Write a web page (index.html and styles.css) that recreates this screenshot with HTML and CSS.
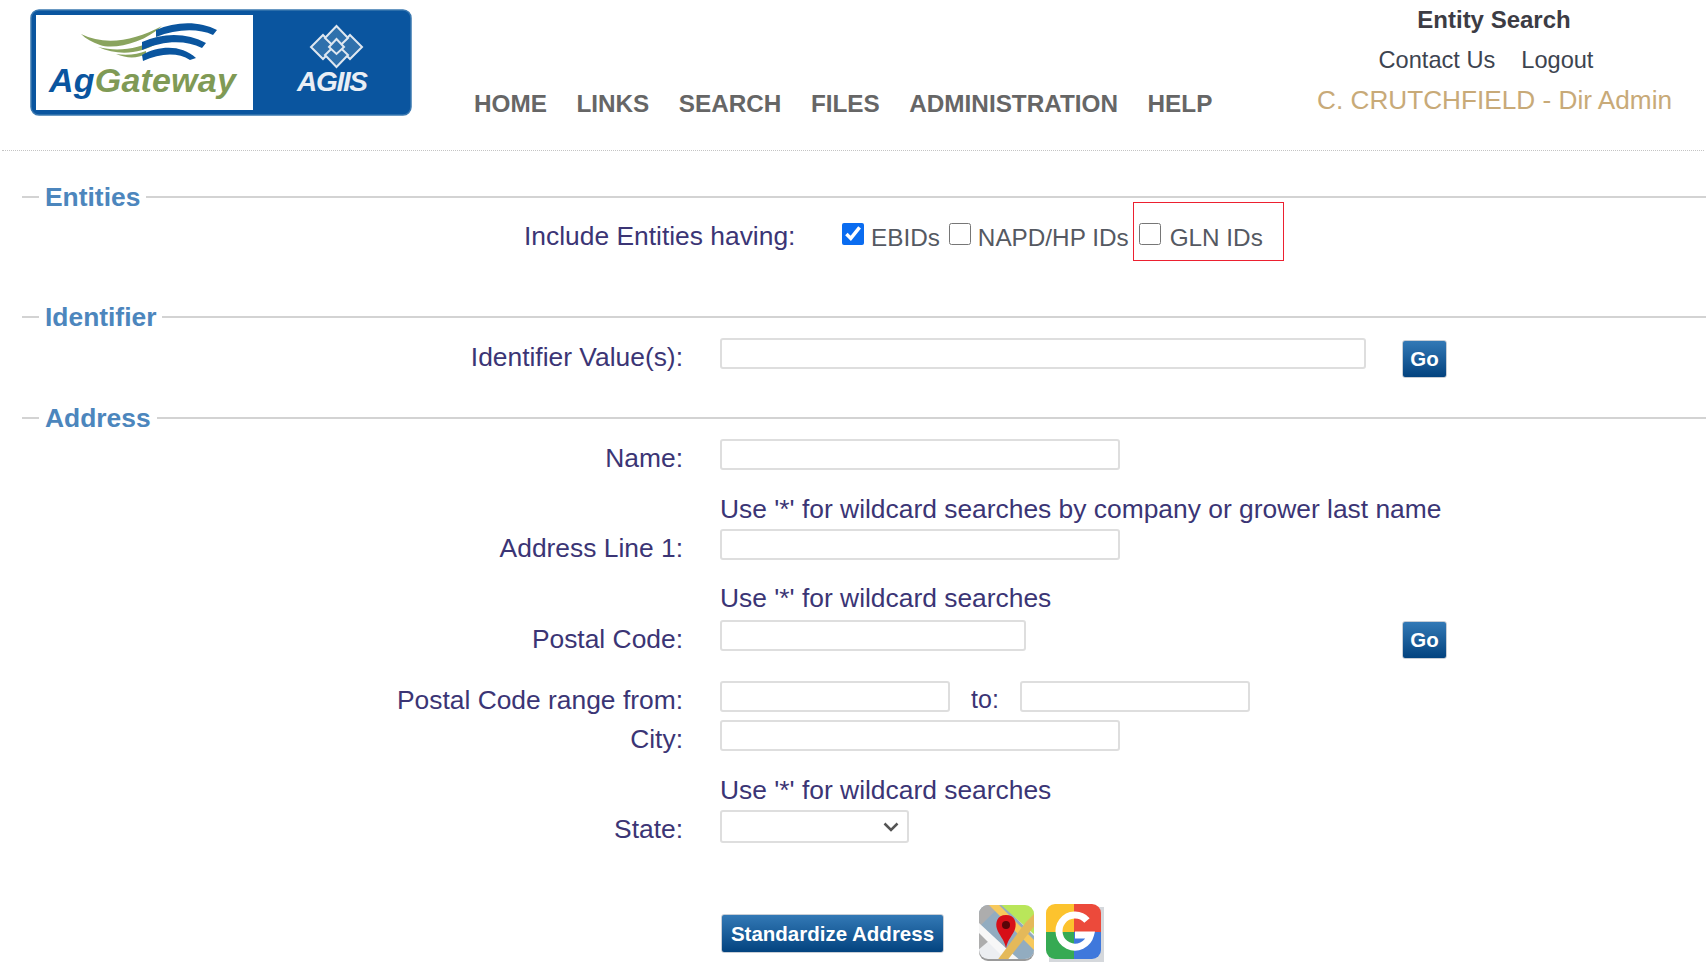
FILE: index.html
```html
<!DOCTYPE html>
<html lang="en">
<head>
<meta charset="utf-8">
<title>Entity Search</title>
<link rel="stylesheet" href="styles.css">
</head>
<body>
<header class="top">
  <svg class="logo" viewBox="0 0 382 107" width="382" height="107" role="img" aria-label="AgGateway AGIIS">
    <rect x="1" y="1" width="380" height="105" rx="8" fill="#0a559f" stroke="#3a78b0" stroke-width="1.500"/>
    <rect x="6" y="6" width="217" height="95" fill="#fff"/>
    <path d="M51 25 C75 37 104 32 132 17 C114 34 84 41 70 36 C62 33 56 30 51 25Z" fill="#8aa45e"/>
    <path d="M68 38 C88 43 108 40 128 30 L128 34 C110 45 88 47 68 38Z" fill="#8aa45e"/>
    <path d="M86 45 C98 47 108 45 116 42 L116 45 C108 49 98 50 86 45Z" fill="#8aa45e"/>
    <path d="M126 21 C146 12 170 12 187 21 L183 26 C168 19 146 20 126 28Z" fill="#0a559f"/>
    <path d="M112 33 C134 23 158 24 176 34 L172 39 C156 31 134 31 112 41Z" fill="#0a559f"/>
    <path d="M112 46 C130 36 152 36 166 49 L160 51 C148 43 130 44 113 52Z" fill="#0a559f"/>
    <text class="logo-ag" x="19" y="83">Ag<tspan class="logo-gate">Gateway</tspan></text>
    <g fill="#2f70ac" stroke="#dfe7f0" stroke-width="2">
      <path d="M293 26 L305 38 L293 50 L281 38Z"/>
      <path d="M320 26 L332 38 L320 50 L308 38Z"/>
      <path d="M306.500 17 L318 29 L306.500 40 L295 29Z"/>
      <path d="M306.500 35 L318 46 L306.500 58 L295 46Z"/>
      <path d="M306.500 30 L314 38 L306.500 45 L299 38Z"/>
    </g>
    <text class="logo-agiis" x="267" y="82">AGIIS</text>
  </svg>
  <nav class="nav">
    <a>HOME</a><a>LINKS</a><a>SEARCH</a><a>FILES</a><a>ADMINISTRATION</a><a>HELP</a>
  </nav>
  <div class="user">
    <div class="user-title">Entity Search</div>
    <div class="user-links"><a>Contact Us</a><a>Logout</a></div>
    <div class="user-name">C. CRUTCHFIELD - Dir Admin</div>
  </div>
</header>

<main>
  <fieldset class="group group-entities">
    <legend>Entities</legend>
    <div class="include">
      <span class="include-label">Include Entities having:</span>
      <label class="check"><input type="checkbox" checked>EBIDs</label>
      <label class="check"><input type="checkbox">NAPD/HP IDs</label>
      <label class="check check-marked"><input type="checkbox">GLN IDs</label>
    </div>
  </fieldset>

  <fieldset class="group group-identifier">
    <legend>Identifier</legend>
    <div class="row row-identifier">
      <label class="label">Identifier Value(s):</label>
      <input class="text w-long" type="text">
      <button class="btn btn-go btn-go-id" type="button">Go</button>
    </div>
  </fieldset>

  <fieldset class="group group-address">
    <legend>Address</legend>
    <div class="row row-name">
      <label class="label">Name:</label>
      <input class="text w-mid" type="text">
    </div>
    <div class="hint hint-first">Use '*' for wildcard searches by company or grower last name</div>
    <div class="row">
      <label class="label">Address Line 1:</label>
      <input class="text w-mid" type="text">
    </div>
    <div class="hint hint-second">Use '*' for wildcard searches</div>
    <div class="row">
      <label class="label">Postal Code:</label>
      <input class="text w-postal" type="text">
      <button class="btn btn-go btn-go-postal" type="button">Go</button>
    </div>
    <div class="row row-range">
      <label class="label">Postal Code range from:</label>
      <input class="text w-range" type="text">
      <span class="to">to:</span>
      <input class="text w-range" type="text">
    </div>
    <div class="row row-city">
      <label class="label">City:</label>
      <input class="text w-mid" type="text">
    </div>
    <div class="hint hint-city">Use '*' for wildcard searches</div>
    <div class="row">
      <label class="label">State:</label>
      <select class="state"><option></option></select>
    </div>
    <div class="actions">
      <button class="btn btn-std" type="button">Standardize Address</button>
      <svg class="icon-map" viewBox="0 0 58 58" width="58" height="58" aria-label="Maps">
        <defs><clipPath id="mapclip"><rect x="1" y="1" width="55" height="54" rx="9"/></clipPath></defs>
        <rect x="1" y="2" width="55" height="55" rx="9" fill="#9a9a9a"/>
        <g clip-path="url(#mapclip)">
          <rect width="58" height="58" fill="#eceef1"/>
          <path d="M0 0H24L58 34V58H36L0 24Z" fill="#92acc0"/>
          <path d="M22 0H58V32Z" fill="#b9e65a"/>
          <path d="M0 0H24L0 24Z" fill="#adadad"/>
          <path d="M10 0H20L58 38V48Z" fill="#f7c95c"/>
          <path d="M0 24L12 36L0 46Z" fill="#adadad"/>
          <path d="M0 18L30 46L44 58H30L0 28Z" fill="#f7f7f7"/>
          <path d="M48 18L58 8V20L28 58H18Z" fill="#e4b95a"/>
        </g>
        <path d="M28 11C19 11 17 19 19 25C21 31 26 35 28 44C30 35 35 31 37 25C39 19 37 11 28 11Z" fill="#d70f18"/>
        <circle cx="28" cy="21" r="4" fill="#5a0508"/>
      </svg>
      <svg class="icon-g" viewBox="0 0 58 58" width="58" height="58" aria-label="Google">
        <rect x="3" y="3" width="55" height="55" fill="#d5d8dc"/>
        <defs><clipPath id="gclip"><rect width="55" height="55" rx="9"/></clipPath></defs>
        <g clip-path="url(#gclip)">
          <rect width="28" height="28" fill="#fcc32e"/>
          <rect x="28" width="27" height="28" fill="#ec4a3b"/>
          <rect y="28" width="28" height="27" fill="#36aa53"/>
          <rect x="28" y="28" width="27" height="27" fill="#3f78dc"/>
        </g>
        <path d="M41 16.500A16 16 0 1 0 44.500 31H29" fill="none" stroke="#fff" stroke-width="7"/>
      </svg>
    </div>
  </fieldset>
</main>
</body>
</html>
```
FILE: styles.css
```css
* { box-sizing: border-box; }
html, body { margin: 0; padding: 0; background: #fff; overflow: hidden; }
body {
  font-family: "Liberation Sans", Arial, sans-serif;
  font-size: 26.400px;
  color: #3b3575;
  height: 976px;
}
.top {
  display: flex;
  height: 151px;
  margin: 0 2px;
  border-bottom: 1px dotted #c4c4c4;
  position: relative;
}
.logo { margin: 9px 0 0 28px; flex: none; }
.logo-ag { font: italic 700 34px "Liberation Sans", sans-serif; fill: #0a559f; letter-spacing: 0.200px; }
.logo-gate { fill: #7f9a55; }
.logo-agiis { font: italic 700 28px "Liberation Sans", sans-serif; fill: #e9eef5; letter-spacing: -1.300px; }
.nav {
  display: flex;
  gap: 29.500px;
  margin-left: 62px;
  padding-top: 90px;
  font-size: 24.300px;
  font-weight: 700;
  color: #666;
  line-height: 28px;
}
.user {
  margin-left: auto;
  width: 354px;
  margin-right: 33px;
  text-align: center;
  line-height: 40px;
  font-size: 24px;
}
.user-title { font-weight: 700; color: #3c3c44; }
.user-links { display: flex; justify-content: center; gap: 26px; color: #3d4450; padding-right: 16px; font-size: 23.600px; }
.user-name { color: #c8aa78; font-size: 26.200px; white-space: nowrap; }

.group { border: 0; border-top: 2px solid #d3d3d3; margin: 0 0 0 22px; padding: 0; min-width: 0; }
.group legend {
  margin-left: 17px;
  padding: 0 6px;
  font-size: 26.400px;
  font-weight: 700;
  line-height: 32px;
  color: #4c86bd;
}
.group-entities { margin-top: 30px; height: 120px; }
.group-identifier { height: 101px; }

.include { display: flex; align-items: center; height: 30px; margin-top: 10px; padding-left: 502px; position: relative; }
.include-label { width: 318px; margin-bottom: 4px; color: #3b3575; }
.check { display: flex; align-items: center; color: #555962; white-space: nowrap; font-size: 24.300px; }
.check input { width: 22px; height: 22px; margin: 0 7px 8px 0; accent-color: #0a6cf0; }
.check + .check { margin-left: 9px; }
.check-marked { position: relative; margin-left: 10px !important; }
.check-marked input { margin-right: 9px; }
.check-marked::after {
  content: "";
  position: absolute;
  left: -6px; top: -21px;
  width: 149px; height: 57px;
  border: 1px solid #ec2030;
}

.row { display: flex; align-items: flex-start; position: relative; }
.label { width: 661px; margin-right: 37px; text-align: right; line-height: 31px; padding-top: 4px; flex: none; }
.row-identifier { margin-top: 5px; }
.text { height: 31px; border: 2px solid #dedede; border-radius: 3px; background: #fff; padding: 0; flex: none; }
.w-long { width: 646px; }
.w-mid { width: 400px; }
.w-postal { width: 306px; }
.w-range { width: 230px; }
.to { width: 70px; text-align: center; line-height: 31px; padding-top: 3px; flex: none; font-size: 25px; }
.row-name { margin-top: 5px; }
.row-range { margin-top: 22px; }
.row-city { margin-top: 4px; }
.hint { margin-left: 698px; line-height: 30px; margin-bottom: 5px; }
.hint-first { margin-top: 20px; }
.hint-second { margin-top: 19px; margin-bottom: 7px; }
.hint-city { margin-top: 20px; }
.state {
  appearance: none;
  width: 189px; height: 33px; margin: 0;
  border: 2px solid #dedede; border-radius: 3px; color: #444; flex: none;
  background: #fff url("data:image/svg+xml,%3Csvg xmlns='http://www.w3.org/2000/svg' width='16' height='10'%3E%3Cpath d='M1.500 1.500L8 8L14.500 1.500' fill='none' stroke='%23555' stroke-width='2.500'/%3E%3C/svg%3E") no-repeat right 8px center;
}
.btn {
  border: 1px solid #c8ced6;
  border-radius: 3px;
  color: #fff;
  font: 700 20.500px "Liberation Sans", sans-serif;
  background: linear-gradient(#3379b6, #03437f);
  padding: 0;
}
.btn-go { width: 45px; height: 38px; margin-top: 2px; flex: none; }
.btn-go-id { margin-left: 36px; }
.btn-go-postal { margin-left: 376px; margin-top: 1px; }
.actions { display: flex; align-items: flex-start; margin: 59px 0 0 699px; }
.btn-std { width: 223px; height: 39px; margin-top: 10px; white-space: nowrap; }
.icon-map { margin-left: 34px; flex: none; }
.icon-g { margin-left: 10px; flex: none; }
```
